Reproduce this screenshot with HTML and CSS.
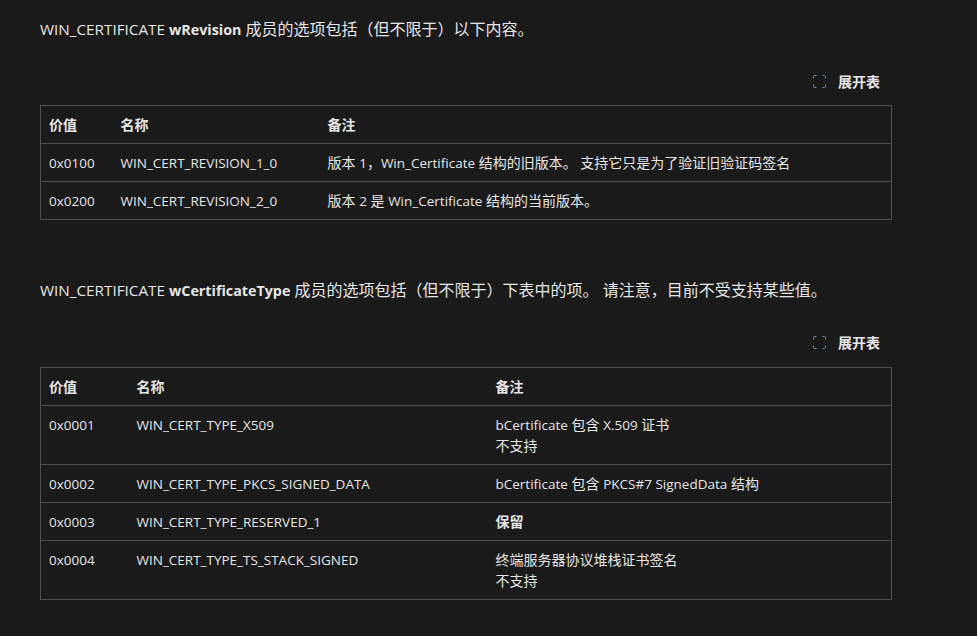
FILE: index.html
```html
<!DOCTYPE html>
<html lang="zh-CN">
<head>
<meta charset="utf-8">
<title>WIN_CERTIFICATE</title>
<link rel="stylesheet" href="styles.css">
</head>
<body>
<main class="content">
<p class="para"><span class="en">WIN_CERTIFICATE</span> <strong class="en-b">wRevision</strong> 成员的选项包括（但不限于）以下内容。</p>
<div class="expand"><button class="expand-btn"><svg class="icon" viewBox="0 0 13 13" width="13" height="13"><path d="M.5 3.5V1.5a1 1 0 0 1 1-1h2M9.5 .5h2a1 1 0 0 1 1 1v2M12.5 9.5v2a1 1 0 0 1-1 1h-2M3.5 12.5h-2a1 1 0 0 1-1-1v-2" fill="none" stroke="#4a9ae0" stroke-width="1"/></svg><span>展开表</span></button></div>
<table class="tbl t1">
<colgroup><col class="c1"><col class="c2"><col></colgroup>
<thead><tr><th>价值</th><th>名称</th><th>备注</th></tr></thead>
<tbody>
<tr><td class="en">0x0100</td><td class="en">WIN_CERT_REVISION_1_0</td><td>版本 <span class="en">1</span>，<span class="en">Win_Certificate</span> 结构的旧版本。 支持它只是为了验证旧验证码签名</td></tr>
<tr><td class="en">0x0200</td><td class="en">WIN_CERT_REVISION_2_0</td><td>版本 <span class="en">2</span> 是 <span class="en">Win_Certificate</span> 结构的当前版本。</td></tr>
</tbody>
</table>
<p class="para second"><span class="en">WIN_CERTIFICATE</span> <strong class="en-b">wCertificateType</strong> 成员的选项包括（但不限于）下表中的项。 请注意，目前不受支持某些值。</p>
<div class="expand"><button class="expand-btn"><svg class="icon" viewBox="0 0 13 13" width="13" height="13"><path d="M.5 3.5V1.5a1 1 0 0 1 1-1h2M9.5 .5h2a1 1 0 0 1 1 1v2M12.5 9.5v2a1 1 0 0 1-1 1h-2M3.5 12.5h-2a1 1 0 0 1-1-1v-2" fill="none" stroke="#4a9ae0" stroke-width="1"/></svg><span>展开表</span></button></div>
<table class="tbl t2">
<colgroup><col class="c1"><col class="c2"><col></colgroup>
<thead><tr><th>价值</th><th>名称</th><th>备注</th></tr></thead>
<tbody>
<tr><td class="en">0x0001</td><td class="en">WIN_CERT_TYPE_X509</td><td><span class="en">bCertificate</span> 包含 <span class="en">X.509</span> 证书<br>不支持</td></tr>
<tr><td class="en">0x0002</td><td class="en">WIN_CERT_TYPE_PKCS_SIGNED_DATA</td><td><span class="en">bCertificate</span> 包含 <span class="en">PKCS#7 SignedData</span> 结构</td></tr>
<tr><td class="en">0x0003</td><td class="en">WIN_CERT_TYPE_RESERVED_1</td><td><strong>保留</strong></td></tr>
<tr><td class="en">0x0004</td><td class="en">WIN_CERT_TYPE_TS_STACK_SIGNED</td><td>终端服务器协议堆栈证书签名<br>不支持</td></tr>
</tbody>
</table>
</main>
</body>
</html>
```
FILE: styles.css
```css
html, body { margin: 0; padding: 0; background: #1a1a1a; overflow: hidden; }
body { color: #e6e6e6; font-family: "Open Sans", "Noto Sans CJK SC", sans-serif; font-size: 14px; line-height: 21px; }
.content { width: 852px; margin-left: 40px; padding-top: 18px; }
.para { margin: 0; font-size: 16px; line-height: 22px; }
.para .en { font-size: 15.25px; line-height: 1; }
.en-b { font-size: 14.3px; font-weight: 700; line-height: 1; }
.second { margin-top: 59px; }
.expand { display: flex; justify-content: flex-end; margin-top: 31px; height: 21px; padding-right: 12px; }
.expand-btn { display: flex; align-items: center; gap: 12px; background: none; border: 0; padding: 0; color: #e6e6e6; font: inherit; font-weight: 700; font-size: 14px; }
.tbl { width: 852px; border-collapse: collapse; table-layout: fixed; margin-top: 13px; border: 1px solid #505050; font-size: 14px; }
.t2 { margin-top: 14px; }
.tbl th, .tbl td { border-top: 1px solid #505050; padding: 8px; text-align: left; vertical-align: top; line-height: 21px; font-weight: 400; }
.tbl td.en { font-size: 13.5px; padding-top: 9px; padding-bottom: 7px; }
.tbl span.en { font-size: 13.5px; line-height: 1; }
.tbl th { font-weight: 700; }
.t1 .c1 { width: 72px; }
.t1 .c2 { width: 207px; }
.t2 .c1 { width: 88px; }
.t2 .c2 { width: 359px; }
```
